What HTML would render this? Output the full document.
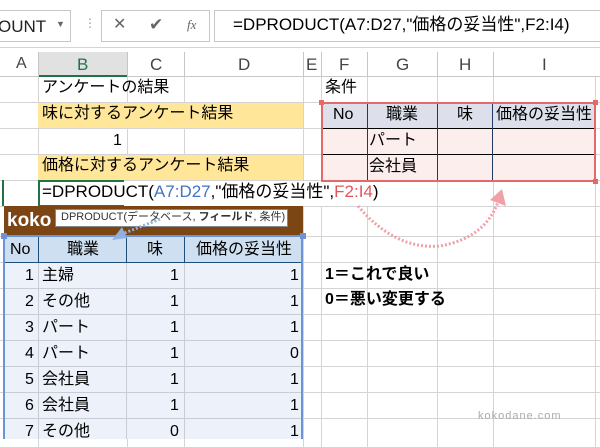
<!DOCTYPE html><html><head><meta charset="utf-8"><style>
body{margin:0;width:600px;height:439px;overflow:hidden;background:#fff;font-family:"Liberation Sans","Noto Sans CJK JP",sans-serif;position:relative}
.a{position:absolute;box-sizing:border-box}
.t{position:absolute;white-space:nowrap;font-size:16px;color:#000;line-height:1}
.vl{position:absolute;width:1px;background:#d4d4d4}
.hl{position:absolute;height:1px;background:#d4d4d4}
.r{text-align:right}
</style></head><body>
<!-- formula bar -->
<div class="a" style="left:0;top:0;width:600px;height:48px;background:#fff;border-bottom:1px solid #d4d4d4"></div>
<div class="a" style="left:-2px;top:10px;width:73px;height:32px;border:1px solid #c6c6c6"></div>
<div class="t" style="left:-2px;top:18px;font-size:17px;color:#222">OUNT</div>
<div class="t" style="left:56px;top:20px;font-size:9px;color:#666">▼</div>
<div class="t" style="left:84px;top:17px;font-size:12px;color:#999">⋮</div>
<div class="a" style="left:101px;top:10px;width:109px;height:32px;border:1px solid #c6c6c6"></div>
<div class="t" style="left:113px;top:17px;font-size:16px;color:#666">✕</div>
<div class="t" style="left:149px;top:16px;font-size:17px;color:#666">✔</div>
<div class="t" style="left:187px;top:18px;font-size:13px;color:#666;font-style:italic;font-family:'Liberation Serif',serif">fx</div>
<div class="a" style="left:214px;top:10px;width:400px;height:32px;border:1px solid #c6c6c6"></div>
<div class="t" style="left:233px;top:16px;font-size:17px">=DPRODUCT(A7:D27,"価格の妥当性",F2:I4)</div>
<!-- column headers -->
<div class="a" style="left:0;top:52px;width:600px;height:25px;background:#fff;border-bottom:1px solid #c6c6c6"></div>
<div class="a" style="left:38px;top:52px;width:89px;height:25px;background:#e1e1e1;border-bottom:2px solid #217346"></div>
<div class="t" style="left:16px;top:56px;font-size:16px;color:#444">A</div>
<div class="t" style="left:77px;top:56px;font-size:17px;color:#217346">B</div>
<div class="t" style="left:150px;top:56px;font-size:17px;color:#444">C</div>
<div class="t" style="left:238px;top:56px;font-size:17px;color:#444">D</div>
<div class="t" style="left:306px;top:56px;font-size:17px;color:#444">E</div>
<div class="t" style="left:339px;top:56px;font-size:17px;color:#444">F</div>
<div class="t" style="left:396px;top:56px;font-size:17px;color:#444">G</div>
<div class="t" style="left:459px;top:56px;font-size:17px;color:#444">H</div>
<div class="t" style="left:542px;top:56px;font-size:17px;color:#444">I</div>
<div class="vl" style="left:38px;top:52px;height:25px;background:#c6c6c6"></div>
<div class="vl" style="left:127px;top:52px;height:25px;background:#c6c6c6"></div>
<div class="vl" style="left:184px;top:52px;height:25px;background:#c6c6c6"></div>
<div class="vl" style="left:303px;top:52px;height:25px;background:#c6c6c6"></div>
<div class="vl" style="left:321px;top:52px;height:25px;background:#c6c6c6"></div>
<div class="vl" style="left:367px;top:52px;height:25px;background:#c6c6c6"></div>
<div class="vl" style="left:437px;top:52px;height:25px;background:#c6c6c6"></div>
<div class="vl" style="left:493px;top:52px;height:25px;background:#c6c6c6"></div>
<!-- grid -->
<div class="vl" style="left:38px;top:77px;height:370px"></div>
<div class="vl" style="left:127px;top:77px;height:370px"></div>
<div class="vl" style="left:184px;top:77px;height:370px"></div>
<div class="vl" style="left:303px;top:77px;height:370px"></div>
<div class="vl" style="left:321px;top:77px;height:370px"></div>
<div class="vl" style="left:367px;top:77px;height:370px"></div>
<div class="vl" style="left:437px;top:77px;height:370px"></div>
<div class="vl" style="left:493px;top:77px;height:370px"></div>
<div class="vl" style="left:595px;top:77px;height:370px"></div>
<div class="hl" style="left:0;top:102px;width:600px"></div>
<div class="hl" style="left:0;top:128px;width:600px"></div>
<div class="hl" style="left:0;top:154px;width:600px"></div>
<div class="hl" style="left:0;top:180px;width:600px"></div>
<div class="hl" style="left:0;top:206px;width:600px"></div>
<div class="hl" style="left:0;top:236px;width:600px"></div>
<div class="hl" style="left:0;top:262px;width:600px"></div>
<div class="hl" style="left:0;top:288px;width:600px"></div>
<div class="hl" style="left:0;top:314px;width:600px"></div>
<div class="hl" style="left:0;top:340px;width:600px"></div>
<div class="hl" style="left:0;top:366px;width:600px"></div>
<div class="hl" style="left:0;top:392px;width:600px"></div>
<div class="hl" style="left:0;top:418px;width:600px"></div>
<!-- left cells -->
<div class="t" style="left:42px;top:80px">アンケートの結果</div>
<div class="a" style="left:38px;top:103px;width:265px;height:25px;background:#ffe699"></div>
<div class="t" style="left:42px;top:106px">味に対するアンケート結果</div>
<div class="t" style="left:113px;top:133px">1</div>
<div class="a" style="left:38px;top:155px;width:265px;height:25px;background:#ffe699"></div>
<div class="t" style="left:42px;top:158px">価格に対するアンケート結果</div>
<div class="a" style="left:38px;top:181px;width:350px;height:25px;background:#fff"></div>
<div class="a" style="left:38px;top:180px;width:86px;height:27px;border:2px solid #217346;border-right:none"></div>
<div class="a" style="left:2px;top:180px;width:2px;height:26px;background:#217346"></div>
<div class="t" style="left:42px;top:183px;font-size:17px">=DPRODUCT(<span style="color:#4472c4">A7:D27</span>,"価格の妥当性",<span style="color:#e15759">F2:I4</span>)</div>
<!-- banner -->
<div class="a" style="left:4px;top:206px;width:299px;height:30px;background:#7b4514"></div>
<div class="t" style="left:7px;top:211px;font-size:19px;font-weight:bold;color:#fff">koko</div>
<div class="a" style="left:55px;top:209px;width:233px;height:18px;background:#fff;border:1px solid #888"></div>
<div class="t" style="left:61px;top:212px;font-size:11px;color:#333">DPRODUCT(データベース, <b>フィールド</b>, 条件)</div>
<!-- data table -->
<div class="a" style="left:4px;top:237px;width:298px;height:25px;background:#cfdff2"></div>
<div class="a" style="left:4px;top:263px;width:298px;height:176px;background:#edf2fa"></div>
<div class="a" style="left:4px;top:262px;width:298px;height:1px;background:#1f4e79"></div>
<div class="a" style="left:38px;top:237px;width:1px;height:25px;background:#1f4e79"></div>
<div class="a" style="left:126px;top:237px;width:1px;height:25px;background:#1f4e79"></div>
<div class="a" style="left:184px;top:237px;width:1px;height:25px;background:#1f4e79"></div>
<div class="a" style="left:38px;top:263px;width:1px;height:176px;background:#c8ccd4"></div>
<div class="a" style="left:126px;top:263px;width:1px;height:176px;background:#c8ccd4"></div>
<div class="a" style="left:184px;top:263px;width:1px;height:176px;background:#c8ccd4"></div>
<div class="a" style="left:4px;top:288px;width:298px;height:1px;background:#c8ccd4"></div>
<div class="a" style="left:4px;top:314px;width:298px;height:1px;background:#c8ccd4"></div>
<div class="a" style="left:4px;top:340px;width:298px;height:1px;background:#c8ccd4"></div>
<div class="a" style="left:4px;top:366px;width:298px;height:1px;background:#c8ccd4"></div>
<div class="a" style="left:4px;top:392px;width:298px;height:1px;background:#c8ccd4"></div>
<div class="a" style="left:4px;top:418px;width:298px;height:1px;background:#c8ccd4"></div>
<div class="a" style="left:3px;top:235px;width:300px;height:204px;border:2px solid #6b93d6;border-bottom:none"></div>
<div class="a" style="left:300px;top:233px;width:6px;height:6px;background:#6b93d6"></div>
<div class="a" style="left:1px;top:233px;width:6px;height:6px;background:#6b93d6"></div>
<div class="t" style="left:10px;top:242px">No</div>
<div class="t" style="left:67px;top:242px">職業</div>
<div class="t" style="left:147px;top:242px">味</div>
<div class="t" style="left:196px;top:242px">価格の妥当性</div>
<div class="t" style="left:25px;top:268px">1</div><div class="t" style="left:42px;top:268px">主婦</div><div class="t" style="left:170px;top:268px">1</div><div class="t" style="left:290px;top:268px">1</div>
<div class="t" style="left:25px;top:294px">2</div><div class="t" style="left:42px;top:294px">その他</div><div class="t" style="left:170px;top:294px">1</div><div class="t" style="left:290px;top:294px">1</div>
<div class="t" style="left:25px;top:320px">3</div><div class="t" style="left:42px;top:320px">パート</div><div class="t" style="left:170px;top:320px">1</div><div class="t" style="left:290px;top:320px">1</div>
<div class="t" style="left:25px;top:346px">4</div><div class="t" style="left:42px;top:346px">パート</div><div class="t" style="left:170px;top:346px">1</div><div class="t" style="left:290px;top:346px">0</div>
<div class="t" style="left:25px;top:372px">5</div><div class="t" style="left:42px;top:372px">会社員</div><div class="t" style="left:170px;top:372px">1</div><div class="t" style="left:290px;top:372px">1</div>
<div class="t" style="left:25px;top:398px">6</div><div class="t" style="left:42px;top:398px">会社員</div><div class="t" style="left:170px;top:398px">1</div><div class="t" style="left:290px;top:398px">1</div>
<div class="t" style="left:25px;top:424px">7</div><div class="t" style="left:42px;top:424px">その他</div><div class="t" style="left:170px;top:424px">0</div><div class="t" style="left:290px;top:424px">1</div>
<!-- conditions -->
<div class="t" style="left:325px;top:80px">条件</div>
<div class="a" style="left:322px;top:103px;width:273px;height:25px;background:#dde0ea"></div>
<div class="a" style="left:322px;top:128px;width:273px;height:52px;background:#fdeeee"></div>
<div class="a" style="left:322px;top:128px;width:273px;height:1px;background:#000"></div>
<div class="a" style="left:322px;top:154px;width:273px;height:1px;background:#000"></div>
<div class="a" style="left:367px;top:103px;width:1px;height:77px;background:#1f3864"></div>
<div class="a" style="left:437px;top:103px;width:1px;height:77px;background:#1f3864"></div>
<div class="a" style="left:492px;top:103px;width:1px;height:77px;background:#1f3864"></div>
<div class="a" style="left:321px;top:102px;width:275px;height:80px;border:2px solid #e46a6a"></div>
<div class="a" style="left:319px;top:100px;width:5px;height:5px;background:#e46a6a"></div>
<div class="a" style="left:593px;top:100px;width:5px;height:5px;background:#e46a6a"></div>
<div class="a" style="left:593px;top:179px;width:5px;height:5px;background:#e46a6a"></div>
<div class="t" style="left:333px;top:107px">No</div>
<div class="t" style="left:386px;top:107px">職業</div>
<div class="t" style="left:457px;top:107px">味</div>
<div class="t" style="left:496px;top:107px">価格の妥当性</div>
<div class="t" style="left:369px;top:133px">パート</div>
<div class="t" style="left:369px;top:159px">会社員</div>
<!-- arrows -->
<svg class="a" style="left:0;top:0" width="600" height="439">
<path d="M358 206 Q395 250 440 246 Q485 238 498 202" fill="none" stroke="#f0a0a8" stroke-width="3" stroke-dasharray="2 2"/>
<polygon points="490,200 502,189 506,206" fill="#f0a0a8"/>
<path d="M160 219 L122 234" stroke="#8fb0e0" stroke-width="3" stroke-dasharray="2 2"/>
<polygon points="112,240 122,227 127,238" fill="#8fb0e0"/>
</svg>
<div class="t" style="left:325px;top:267px;font-weight:bold">1＝これで良い</div>
<div class="t" style="left:325px;top:292px;font-weight:bold">0＝悪い変更する</div>
<div class="t" style="left:478px;top:411px;font-size:11px;color:#aaa;letter-spacing:1px">kokodane.com</div>
</body></html>
